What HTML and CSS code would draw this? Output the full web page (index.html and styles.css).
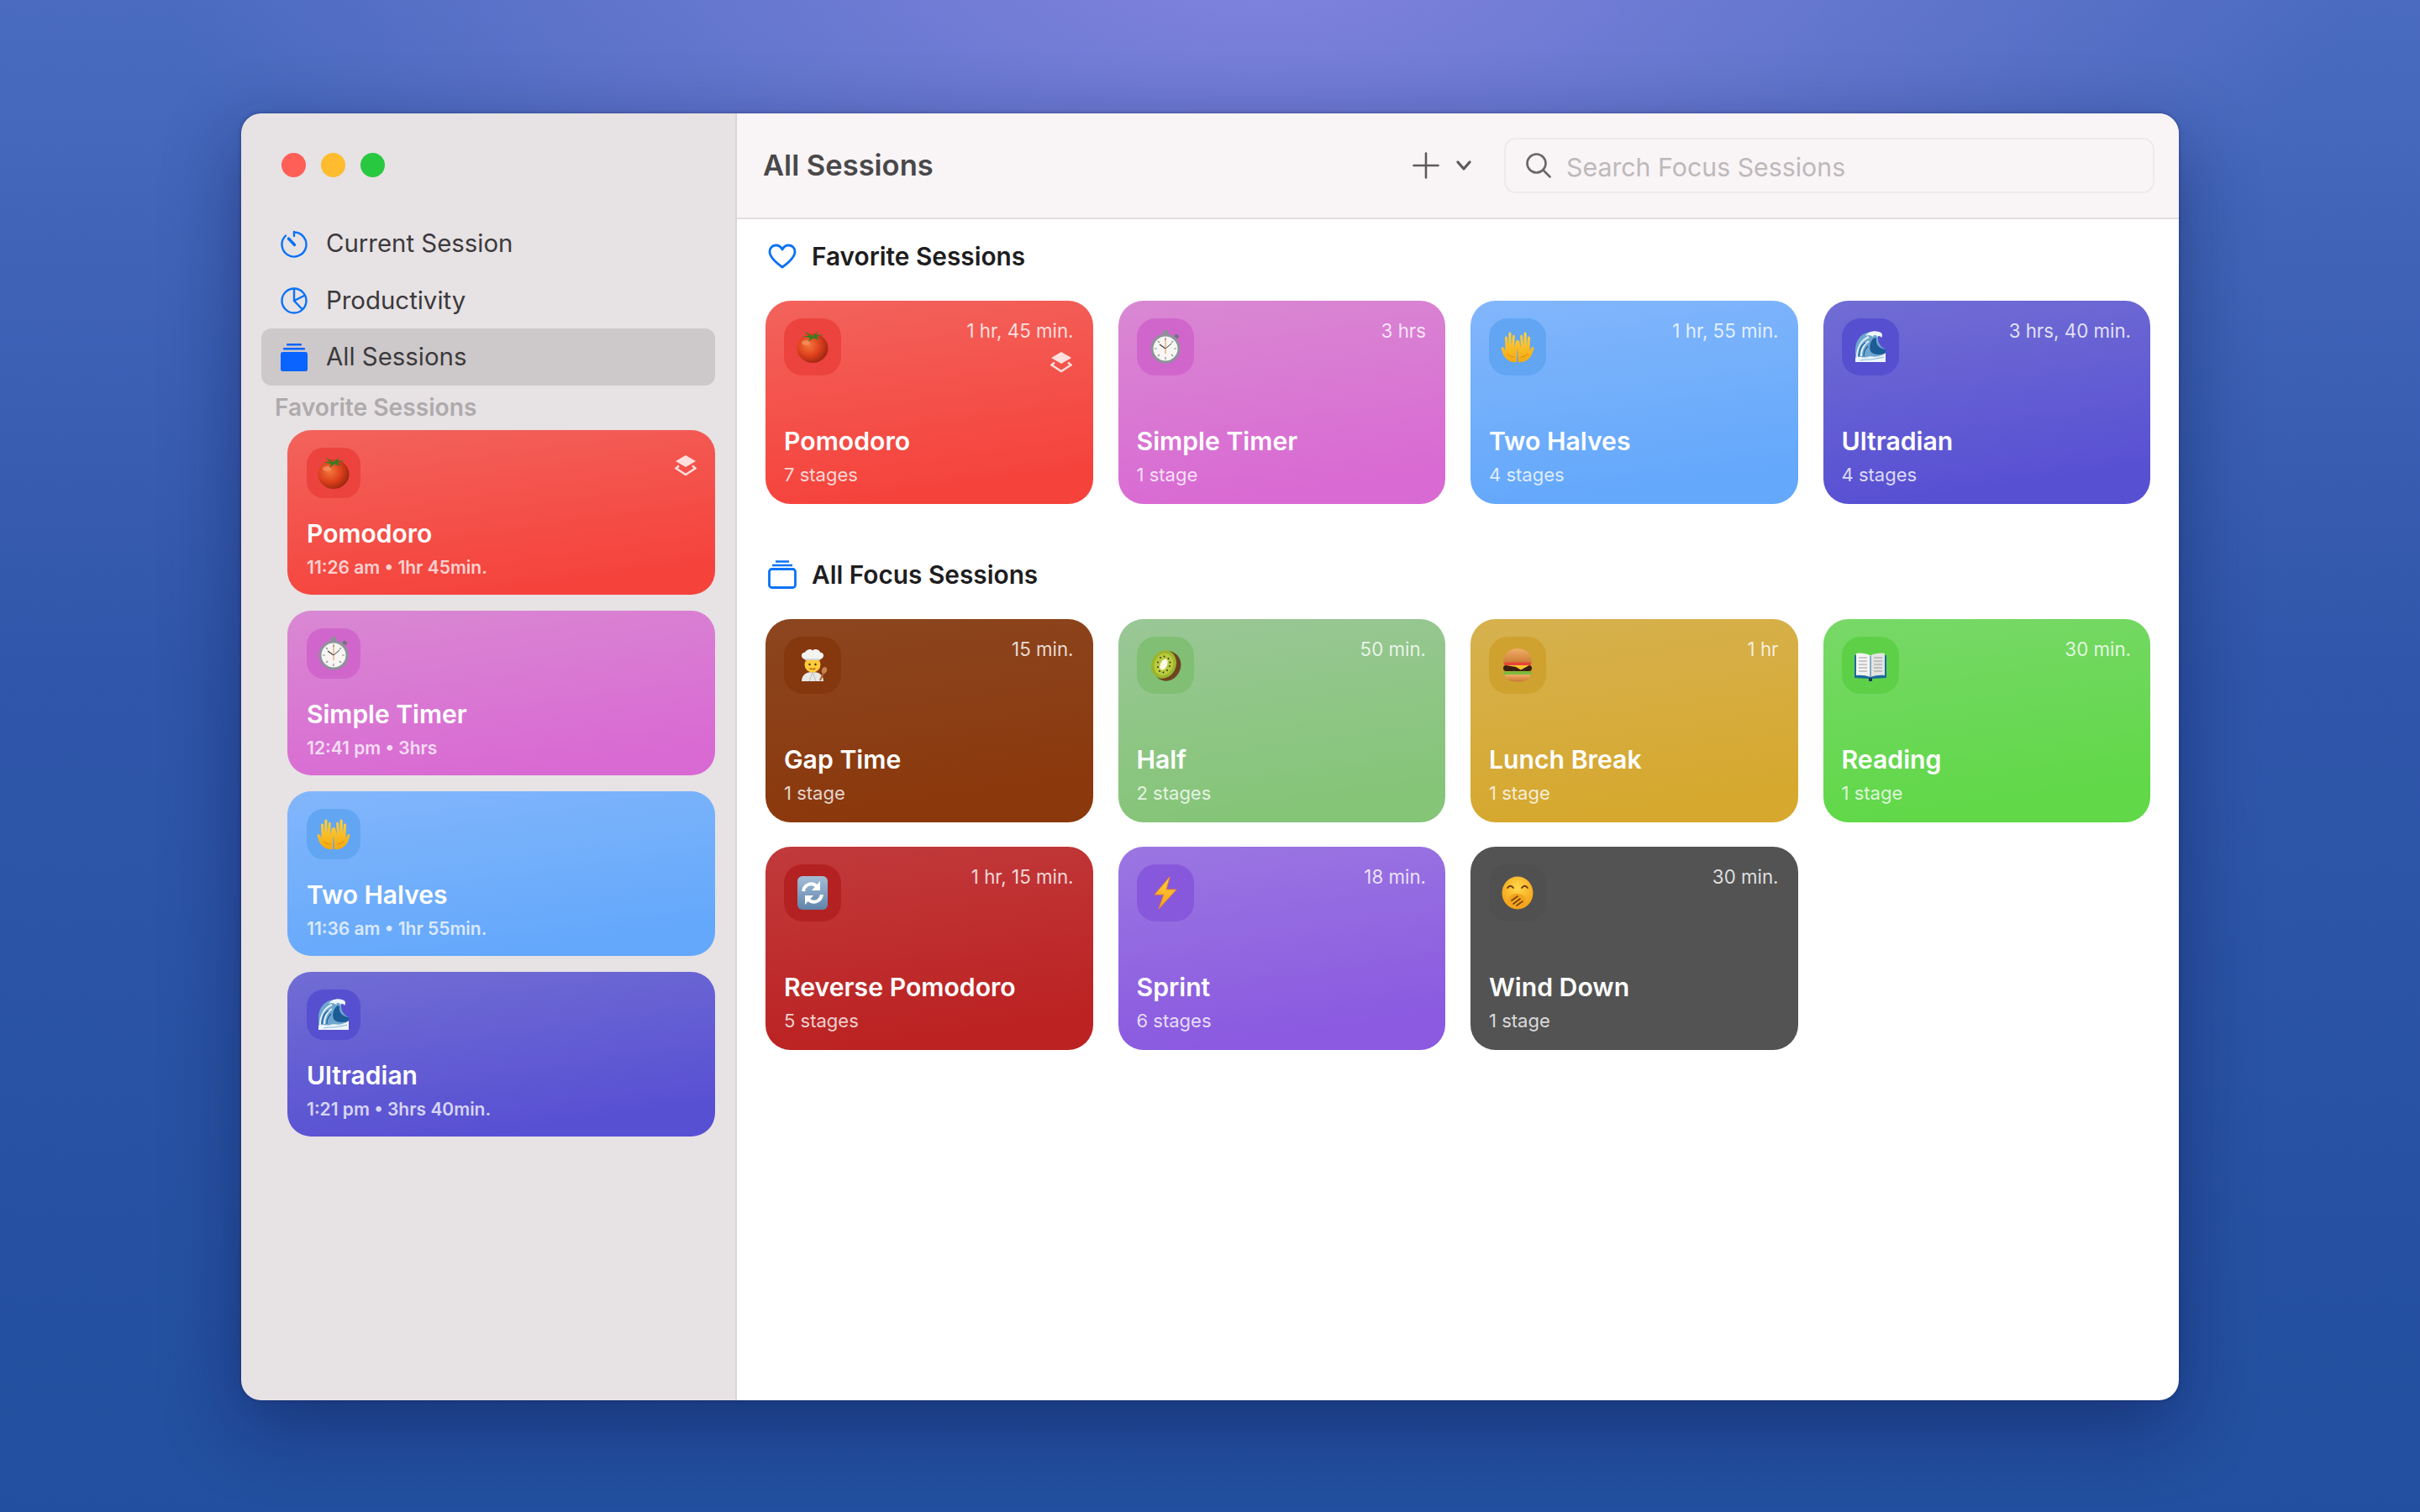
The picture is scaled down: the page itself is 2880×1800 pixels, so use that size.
FILE: index.html
```html
<!DOCTYPE html>
<html lang="en">
<head>
    <meta charset="UTF-8">
    <meta name="viewport" content="width=device-width, initial-scale=1.0">
    <title>All Sessions</title>
    <link rel="stylesheet" href="styles.css">
</head>
<body>
    <svg class="sprites" xmlns="http://www.w3.org/2000/svg">
        <defs>
            <radialGradient id="g-tomato" cx="38%" cy="40%" r="68%">
                <stop offset="0" stop-color="#f4783c"/>
                <stop offset=".55" stop-color="#dc3f1c"/>
                <stop offset="1" stop-color="#96240e"/>
            </radialGradient>
            <linearGradient id="g-hand" x1="0" y1="0" x2="0" y2="1">
                <stop offset="0" stop-color="#ffd23e"/>
                <stop offset="1" stop-color="#f4a90f"/>
            </linearGradient>
            <radialGradient id="g-face" cx="50%" cy="35%" r="70%">
                <stop offset="0" stop-color="#ffd84a"/>
                <stop offset="1" stop-color="#f39a12"/>
            </radialGradient>
            <linearGradient id="g-bun" x1="0" y1="0" x2="0" y2="1">
                <stop offset="0" stop-color="#f0ad68"/>
                <stop offset="1" stop-color="#cc7a34"/>
            </linearGradient>
            <linearGradient id="g-refresh" x1="0" y1="0" x2="0" y2="1">
                <stop offset="0" stop-color="#a5bdd6"/>
                <stop offset="1" stop-color="#5f84ab"/>
            </linearGradient>
            <linearGradient id="g-bolt" x1="0" y1="0" x2="0" y2="1">
                <stop offset="0" stop-color="#ffd23e"/>
                <stop offset="1" stop-color="#f7a01c"/>
            </linearGradient>
        </defs>

        <symbol id="e-tomato" viewBox="0 0 40 40">
            <ellipse cx="20" cy="21.5" rx="18.5" ry="17.5" fill="url(#g-tomato)"/>
            <ellipse cx="12" cy="15" rx="5" ry="3" fill="#f9a578" opacity=".55"/>
            <path d="M20 7 L10 1 L16 7 L8 7 L17 9.5 L15 14 L21 9.5 L28 12 L25 8 L33 5 L24 6 L27 1 Z" fill="#3c7a24"/>
        </symbol>

        <symbol id="e-watch" viewBox="0 0 40 40">
            <rect x="17" y="0" width="6" height="5" rx="1.5" fill="#8b8f97"/>
            <rect x="31" y="5" width="5" height="4" rx="1" fill="#6f747c" transform="rotate(40 33 7)"/>
            <circle cx="20" cy="22" r="17.5" fill="#8d929a"/>
            <circle cx="20" cy="22" r="14.5" fill="#f7f6f3"/>
            <g stroke="#8b8f97" stroke-width="1.2">
                <path d="M20 9v3M20 32v3M7 22h3M30 22h3M11 13l2 2M29 13l-2 2M11 31l2-2M29 31l-2-2"/>
            </g>
            <path d="M20 22 L13 17" stroke="#3c3f44" stroke-width="1.2"/>
            <path d="M20 22 L27 16" stroke="#3c3f44" stroke-width="1"/>
            <path d="M20 10 L20 28" stroke="#e8742f" stroke-width=".8"/>
        </symbol>

        <symbol id="e-hands" viewBox="0 0 40 40">
            <path d="M19 38 C12 39 6 35 3 29 L0.6 22 C0 20 2.6 19 3.6 21 L5.5 25 L5 9 C5 7 7.8 7 8 9 L9 19 L9.4 4 C9.5 2 12.4 2 12.4 4 L12.6 19 L14 7 C14.3 5 17 5.4 16.8 7.4 L16 21 L18 13 C18.6 11 21 12 20.6 14 L19.4 28 Z" fill="url(#g-hand)"/>
            <path d="M21 38 C28 39 34 35 37 29 L39.4 22 C40 20 37.4 19 36.4 21 L34.5 25 L35 9 C35 7 32.2 7 32 9 L31 19 L30.6 4 C30.5 2 27.6 2 27.6 4 L27.4 19 L26 7 C25.7 5 23 5.4 23.2 7.4 L24 21 L22 13 C21.4 11 19 12 19.4 14 L20.6 28 Z" fill="url(#g-hand)"/>
            <path d="M8 28 C10 31 13 32 16 32 M32 28 C30 31 27 32 24 32" fill="none" stroke="#d98a0c" stroke-width="1"/>
        </symbol>

        <symbol id="e-wave" viewBox="0 0 40 40">
            <path d="M2 38 V24 C2 11 10 3 20 2 L30 3 C28 10 28 18 38 23 V38 Z" fill="#6fa6cf"/>
            <path d="M25 9 C20 12 18 19 20 25 C22 29 29 30 38 28 V23 C30 22 26 17 27 10 Z" fill="#1b5c96"/>
            <path d="M4 32 C4 21 9 12 18 8 M9 31 C9 24 12 17 18 13" fill="none" stroke="#e4eff7" stroke-width="2"/>
            <path d="M6 33 C6 24 9 18 14 15 M12 31 C12 26 14 22 17 19" fill="none" stroke="#1f639c" stroke-width="1.3"/>
            <path d="M14 7 C17 2 24 0 30 2 C34 3 35 6 33 9 C32 7 30 6 28 8 C27 5 24 5 23 8 C21 6 17 5 14 7 Z" fill="#eef5fa"/>
            <path d="M2 38 V33 C7 30 11 34 16 32 C21 30 24 33 30 31 C33 30 36 29 38 27 V38 Z" fill="#eef5fa"/>
            <path d="M8 36 C14 34 20 36 26 34 C30 33 33 33 36 32" fill="none" stroke="#8fbcdc" stroke-width="1.2"/>
        </symbol>

        <symbol id="e-cook" viewBox="0 0 40 40">
            <path d="M7 39 C7 31 13 28 20 28 C27 28 33 31 33 39 Z" fill="#e8e8e6"/>
            <path d="M20 28 L16 39 M20 28 L24 39" stroke="#bdbdbb" stroke-width="1"/>
            <circle cx="20" cy="19" r="9.5" fill="#ffcb3a"/>
            <path d="M10.5 18 C11 14 14 13 20 13 C26 13 29 14 29.5 18 L29 13 L11 13 Z" fill="#a3592a"/>
            <path d="M11 13 C6 12 5 5 11 4.5 C13 1 18 0 20 2.5 C23 0 28 1 29 4.5 C35 5 34 12 29 13 Z" fill="#f3f3f1"/>
            <path d="M11 12h18v2H11z" fill="#d4d4d2"/>
            <circle cx="16.5" cy="19" r="1.2" fill="#4a2c10"/>
            <circle cx="23.5" cy="19" r="1.2" fill="#4a2c10"/>
            <path d="M16.5 23.5 C18 25 22 25 23.5 23.5" fill="none" stroke="#a9591c" stroke-width="1.1"/>
            <path d="M29 38 L33 29" stroke="#a8683a" stroke-width="2"/>
            <ellipse cx="34" cy="26" rx="3" ry="4" fill="#c4854f" transform="rotate(20 34 26)"/>
        </symbol>

        <symbol id="e-kiwi" viewBox="0 0 40 40">
            <ellipse cx="22" cy="21" rx="16" ry="18" fill="#6d4420" transform="rotate(25 22 21)"/>
            <ellipse cx="18" cy="19" rx="14.5" ry="17" fill="#9bb52c" transform="rotate(25 18 19)"/>
            <ellipse cx="18" cy="19" rx="11" ry="13.5" fill="#b9cb3f" transform="rotate(25 18 19)"/>
            <ellipse cx="18" cy="19" rx="4" ry="7" fill="#fbfbe8" transform="rotate(25 18 19)"/>
            <g fill="#2b2a14">
                <circle cx="23.5" cy="12" r=".9"/><circle cx="25.5" cy="16.5" r=".9"/><circle cx="25" cy="21" r=".9"/>
                <circle cx="22" cy="26" r=".9"/><circle cx="17.5" cy="28.5" r=".9"/><circle cx="13" cy="27" r=".9"/>
                <circle cx="11" cy="22" r=".9"/><circle cx="11" cy="16.5" r=".9"/><circle cx="14" cy="11" r=".9"/>
                <circle cx="18.5" cy="9.5" r=".9"/>
            </g>
        </symbol>

        <symbol id="e-burger" viewBox="0 0 40 40">
            <path d="M3 18 C3 6 11 0 20 0 C29 0 37 6 37 18 Z" fill="url(#g-bun)"/>
            <rect x="4" y="16.5" width="32" height="4" rx="2" fill="#e8453a"/>
            <rect x="3" y="20" width="34" height="7" rx="3.5" fill="#3a1f10"/>
            <path d="M6 20 H34 L24 25.5 L18 22 Z" fill="#f7c52e"/>
            <path d="M3 28 C6 26 10 29 14 27 C18 26 22 29 26 27 C30 26 34 29 37 27 L36 32 H4 Z" fill="#7dbb3b"/>
            <path d="M5 31 H35 C35 37 30 39.5 20 39.5 C10 39.5 5 37 5 31 Z" fill="url(#g-bun)"/>
        </symbol>

        <symbol id="e-book" viewBox="0 0 40 40">
            <path d="M1 35 V8 L19 9 L21 9 L39 8 V35 L21 36 H19 Z" fill="#1c6a9c"/>
            <path d="M3 32 V6 C9 5 15 6 19.5 8 V34 C15 32 9 31.5 3 32 Z" fill="#f4f4f2"/>
            <path d="M37 32 V6 C31 5 25 6 20.5 8 V34 C25 32 31 31.5 37 32 Z" fill="#e3e3e1"/>
            <path d="M6 11h10M6 15h10M6 19h10M6 23h10M6 27h10M24 11h10M24 15h10M24 19h10M24 23h10M24 27h10" stroke="#9c9c9c" stroke-width="1.1"/>
            <rect x="18" y="35" width="4" height="4" fill="#123c5c"/>
        </symbol>

        <symbol id="e-refresh" viewBox="0 0 40 40">
            <rect x="2" y="0" width="36" height="40" rx="6" fill="url(#g-refresh)"/>
            <path d="M9 18 C10 11 16 8 22 10 L25 12" fill="none" stroke="#fff" stroke-width="4"/>
            <path d="M29 6 V17 H19 Z" fill="#fff"/>
            <path d="M31 22 C30 29 24 32 18 30 L15 28" fill="none" stroke="#fff" stroke-width="4"/>
            <path d="M11 34 V23 H21 Z" fill="#fff"/>
        </symbol>

        <symbol id="e-bolt" viewBox="0 0 40 40">
            <path d="M25 1 L7 22 H18 L12 39 L33 16 H21 Z" fill="url(#g-bolt)" stroke="#f08a18" stroke-width="1" stroke-linejoin="round"/>
        </symbol>

        <symbol id="e-yawn" viewBox="0 0 40 40">
            <ellipse cx="20" cy="20" rx="18.5" ry="19.5" fill="url(#g-face)"/>
            <path d="M8 14 C10 11 13 11 15 14 M25 14 C27 11 30 11 32 14" fill="none" stroke="#6b3a10" stroke-width="1.8" stroke-linecap="round"/>
            <path d="M10 33 C8 27 11 21 17 21 C23 20 29 23 30 28 C30 33 25 38 18 38 C14 38 11 36 10 33 Z" fill="#f3a520"/>
            <path d="M13 29 L20 24 M15 33 L23 27 M19 35 L26 30" stroke="#7a4510" stroke-width="1.7" stroke-linecap="round"/>
        </symbol>

        <symbol id="i-layers" viewBox="0 0 26 26">
            <path d="M13 1 L25 8 L13 15 L1 8 Z" fill="currentColor"/>
            <path d="M5 13.5 L1.5 16.5 L13 24 L24.5 16.5 L21 13.5" fill="none" stroke="currentColor" stroke-width="2.4"/>
        </symbol>
    </svg>

    <div class="window">
        <aside class="sidebar">
            <div class="lights">
                <span class="light light-red"></span>
                <span class="light light-yellow"></span>
                <span class="light light-green"></span>
            </div>

            <nav class="nav">
                <div class="nav-row">
                    <svg class="nav-icon" viewBox="0 0 32 34" fill="none" stroke="#0a72f5" stroke-width="2.4">
                        <path d="M16 3.5 A14.5 14.5 0 1 1 6 7.5" stroke-linecap="round"/>
                        <path d="M16 3 V8" stroke-linecap="round"/>
                        <path d="M9.5 11 L16.5 18.5" stroke-width="3.4" stroke-linecap="round"/>
                    </svg>
                    <span>Current Session</span>
                </div>
                <div class="nav-row">
                    <svg class="nav-icon" viewBox="0 0 32 34" fill="none" stroke="#0a72f5" stroke-width="2.4">
                        <circle cx="16" cy="18" r="14.5"/>
                        <path d="M16 3.5 V18 L26 28.5 M16 18 L29 11.5"/>
                    </svg>
                    <span>Productivity</span>
                </div>
                <div class="nav-row nav-row-active">
                    <svg class="nav-icon" viewBox="0 0 32 34" fill="#0a64ff">
                        <rect x="0" y="11" width="32" height="23" rx="2.5"/>
                        <rect x="3" y="6" width="26" height="2.5" rx="1"/>
                        <rect x="7" y="1" width="18" height="2.5" rx="1"/>
                    </svg>
                    <span>All Sessions</span>
                </div>
            </nav>

            <div class="side-label">Favorite Sessions</div>

            <div class="side-cards">
                <div class="side-card bg-red">
                    <div class="card-top">
                        <div class="tile tile-red"><svg class="emoji"><use href="#e-tomato"/></svg></div>
                        <svg class="layers side-layers"><use href="#i-layers"/></svg>
                    </div>
                    <div class="side-name">Pomodoro</div>
                    <div class="side-sub">11:26 am • 1hr 45min.</div>
                </div>
                <div class="side-card bg-pink">
                    <div class="card-top">
                        <div class="tile tile-pink"><svg class="emoji"><use href="#e-watch"/></svg></div>
                    </div>
                    <div class="side-name">Simple Timer</div>
                    <div class="side-sub">12:41 pm • 3hrs</div>
                </div>
                <div class="side-card bg-blue">
                    <div class="card-top">
                        <div class="tile tile-blue"><svg class="emoji"><use href="#e-hands"/></svg></div>
                    </div>
                    <div class="side-name">Two Halves</div>
                    <div class="side-sub">11:36 am • 1hr 55min.</div>
                </div>
                <div class="side-card bg-indigo">
                    <div class="card-top">
                        <div class="tile tile-indigo"><svg class="emoji"><use href="#e-wave"/></svg></div>
                    </div>
                    <div class="side-name">Ultradian</div>
                    <div class="side-sub">1:21 pm • 3hrs 40min.</div>
                </div>
            </div>
        </aside>

        <main class="main">
            <header class="toolbar">
                <h1 class="toolbar-title">All Sessions</h1>
                <div class="add-btn">
                    <svg class="add-plus" viewBox="0 0 32 32" stroke="#5d5a5c" stroke-width="2.6" stroke-linecap="round">
                        <path d="M16 1.5 V30.5 M1.5 16 H30.5"/>
                    </svg>
                    <svg class="add-chevron" viewBox="0 0 18 12" fill="none" stroke="#5d5a5c" stroke-width="3.2" stroke-linecap="round" stroke-linejoin="round">
                        <path d="M2 2 L9 10 L16 2"/>
                    </svg>
                </div>
                <div class="search">
                    <svg class="search-icon" viewBox="0 0 30 30" fill="none" stroke="#6a6769" stroke-width="2.6" stroke-linecap="round">
                        <circle cx="12.5" cy="12.5" r="11"/>
                        <path d="M20.5 20.5 L28.5 28.5"/>
                    </svg>
                    <span class="search-text">Search Focus Sessions</span>
                </div>
            </header>

            <div class="content">
                <div class="section-head section-head-first">
                    <svg class="section-icon" viewBox="0 0 34 30" fill="none" stroke="#0a72f5" stroke-width="2.8" stroke-linejoin="round">
                        <path d="M17 28 C10 23 2 16 2 9.5 C2 5 5.5 2 9.5 2 C12.8 2 15.5 4 17 7 C18.5 4 21.2 2 24.5 2 C28.5 2 32 5 32 9.5 C32 16 24 23 17 28 Z"/>
                    </svg>
                    <h2 class="section-title">Favorite Sessions</h2>
                </div>

                <div class="card-grid">
                    <div class="card bg-red">
                        <div class="card-top">
                            <div class="tile tile-red"><svg class="emoji"><use href="#e-tomato"/></svg></div>
                            <div class="card-meta">
                                <span class="card-time">1 hr, 45 min.</span>
                                <svg class="layers"><use href="#i-layers"/></svg>
                            </div>
                        </div>
                        <div class="card-name">Pomodoro</div>
                        <div class="card-sub">7 stages</div>
                    </div>
                    <div class="card bg-pink">
                        <div class="card-top">
                            <div class="tile tile-pink"><svg class="emoji"><use href="#e-watch"/></svg></div>
                            <div class="card-meta"><span class="card-time">3 hrs</span></div>
                        </div>
                        <div class="card-name">Simple Timer</div>
                        <div class="card-sub">1 stage</div>
                    </div>
                    <div class="card bg-blue">
                        <div class="card-top">
                            <div class="tile tile-blue"><svg class="emoji"><use href="#e-hands"/></svg></div>
                            <div class="card-meta"><span class="card-time">1 hr, 55 min.</span></div>
                        </div>
                        <div class="card-name">Two Halves</div>
                        <div class="card-sub">4 stages</div>
                    </div>
                    <div class="card bg-indigo">
                        <div class="card-top">
                            <div class="tile tile-indigo"><svg class="emoji"><use href="#e-wave"/></svg></div>
                            <div class="card-meta"><span class="card-time">3 hrs, 40 min.</span></div>
                        </div>
                        <div class="card-name">Ultradian</div>
                        <div class="card-sub">4 stages</div>
                    </div>
                </div>

                <div class="section-head section-head-second">
                    <svg class="section-icon" viewBox="0 0 34 34" fill="none" stroke="#0a72f5" stroke-width="2.8">
                        <rect x="1.5" y="10.5" width="31" height="22" rx="3"/>
                        <path d="M5 6 H29 M9 1.5 H25" stroke-width="2.4"/>
                    </svg>
                    <h2 class="section-title">All Focus Sessions</h2>
                </div>

                <div class="card-grid">
                    <div class="card bg-brown">
                        <div class="card-top">
                            <div class="tile tile-brown"><svg class="emoji"><use href="#e-cook"/></svg></div>
                            <div class="card-meta"><span class="card-time">15 min.</span></div>
                        </div>
                        <div class="card-name">Gap Time</div>
                        <div class="card-sub">1 stage</div>
                    </div>
                    <div class="card bg-sage">
                        <div class="card-top">
                            <div class="tile tile-sage"><svg class="emoji"><use href="#e-kiwi"/></svg></div>
                            <div class="card-meta"><span class="card-time">50 min.</span></div>
                        </div>
                        <div class="card-name">Half</div>
                        <div class="card-sub">2 stages</div>
                    </div>
                    <div class="card bg-gold">
                        <div class="card-top">
                            <div class="tile tile-gold"><svg class="emoji"><use href="#e-burger"/></svg></div>
                            <div class="card-meta"><span class="card-time">1 hr</span></div>
                        </div>
                        <div class="card-name">Lunch Break</div>
                        <div class="card-sub">1 stage</div>
                    </div>
                    <div class="card bg-green">
                        <div class="card-top">
                            <div class="tile tile-green"><svg class="emoji"><use href="#e-book"/></svg></div>
                            <div class="card-meta"><span class="card-time">30 min.</span></div>
                        </div>
                        <div class="card-name">Reading</div>
                        <div class="card-sub">1 stage</div>
                    </div>
                    <div class="card bg-crimson">
                        <div class="card-top">
                            <div class="tile tile-crimson"><svg class="emoji"><use href="#e-refresh"/></svg></div>
                            <div class="card-meta"><span class="card-time">1 hr, 15 min.</span></div>
                        </div>
                        <div class="card-name">Reverse Pomodoro</div>
                        <div class="card-sub">5 stages</div>
                    </div>
                    <div class="card bg-purple">
                        <div class="card-top">
                            <div class="tile tile-purple"><svg class="emoji"><use href="#e-bolt"/></svg></div>
                            <div class="card-meta"><span class="card-time">18 min.</span></div>
                        </div>
                        <div class="card-name">Sprint</div>
                        <div class="card-sub">6 stages</div>
                    </div>
                    <div class="card bg-gray">
                        <div class="card-top">
                            <div class="tile tile-gray"><svg class="emoji"><use href="#e-yawn"/></svg></div>
                            <div class="card-meta"><span class="card-time">30 min.</span></div>
                        </div>
                        <div class="card-name">Wind Down</div>
                        <div class="card-sub">1 stage</div>
                    </div>
                </div>
            </div>
        </main>
    </div>
</body>
</html>
```

FILE: styles.css
```css
* {
    box-sizing: border-box;
}

body {
    display: flex;
    align-items: center;
    justify-content: center;
    height: 100vh;
    margin: 0;
    padding-top: 2px;
    overflow: hidden;
    font-family: 'Inter', 'Liberation Sans', sans-serif;
    background-color: #2f55a8;
    background-image:
        radial-gradient(ellipse 1300px 560px at 1500px -40px, #8183de 0%, rgba(129, 131, 222, 0) 100%),
        linear-gradient(180deg, #4a6bc0 0%, #2f56aa 45%, #224f9f 100%);
}

.sprites {
    position: absolute;
    width: 0;
    height: 0;
}

.window {
    display: flex;
    width: 2306px;
    height: 1532px;
    border-radius: 24px;
    overflow: hidden;
    box-shadow: 0 30px 90px rgba(10, 20, 70, 0.45), 0 0 4px rgba(10, 20, 70, 0.4);
}

/* sidebar */

.sidebar {
    flex: 0 0 590px;
    padding: 47px 24px 0 24px;
    background-color: #e7e2e4;
    border-right: 2px solid #dad6d8;
}

.lights {
    display: flex;
    gap: 18px;
    height: 29px;
    margin: 0 0 45px 24px;
}

.light {
    width: 29px;
    height: 29px;
    border-radius: 50%;
}

.light-red { background-color: #ff5f57; }
.light-yellow { background-color: #febc2e; }
.light-green { background-color: #28c840; }

.nav-row {
    display: flex;
    align-items: center;
    gap: 22px;
    height: 67.5px;
    padding-left: 23px;
    border-radius: 12px;
    font-size: 29.4px;
    color: #3b3a3c;
}

.nav-row-active {
    background-color: #cdc8ca;
}

.nav-icon {
    width: 32px;
    height: 34px;
}

.side-label {
    height: 53px;
    padding-left: 16px;
    font-size: 28.2px;
    line-height: 53px;
    font-weight: 600;
    color: #aeaaac;
}

.side-cards {
    display: flex;
    flex-direction: column;
    gap: 19px;
    margin-left: 31px;
}

.side-card {
    display: flex;
    flex-direction: column;
    height: 196px;
    padding: 21px 22px 18px 23px;
    border-radius: 28px;
    color: white;
}

.side-card .tile {
    width: 64px;
    height: 60px;
    border-radius: 20px;
}

.side-name {
    margin-top: auto;
    font-size: 30px;
    line-height: 40px;
    font-weight: 600;
}

.side-sub {
    margin-top: 7px;
    font-size: 21px;
    line-height: 28px;
    font-weight: 600;
    color: rgba(255, 255, 255, 0.75);
}

/* main */

.main {
    display: flex;
    flex: 1;
    flex-direction: column;
    background-color: white;
}

.toolbar {
    display: flex;
    align-items: center;
    flex: 0 0 126px;
    padding: 0 29px 0 31px;
    background-color: #f9f4f6;
    border-bottom: 2px solid #e2dfe0;
}

.toolbar-title {
    margin: 0 auto 2px 0;
    font-size: 34.5px;
    font-weight: 600;
    color: #49484a;
}

.add-btn {
    display: flex;
    align-items: center;
    gap: 20px;
    margin-right: 39px;
}

.add-plus {
    width: 32px;
    height: 32px;
}

.add-chevron {
    width: 18px;
    height: 12px;
}

.search {
    display: flex;
    align-items: center;
    gap: 18px;
    width: 774px;
    height: 66px;
    padding-left: 24px;
    border: 2px solid #eeeaec;
    border-radius: 14px;
}

.search-icon {
    width: 30px;
    height: 30px;
}

.search-text {
    padding-top: 4px;
    font-size: 30.3px;
    color: #bdb9bb;
}

.content {
    padding: 27px 34px 0 34px;
}

.section-head {
    display: flex;
    align-items: center;
    gap: 18px;
    height: 34px;
    padding-left: 3px;
}

.section-head-first {
    margin-bottom: 36px;
}

.section-head-second {
    margin-top: 67px;
    margin-bottom: 36px;
}

.section-icon {
    width: 34px;
    height: 34px;
}

.section-title {
    margin: 0;
    font-size: 29.8px;
    font-weight: 600;
    color: #1e1d1f;
}

.card-grid {
    display: grid;
    grid-template-columns: repeat(4, 389.5px);
    grid-auto-rows: 242px;
    gap: 29px 30px;
}

.card {
    display: flex;
    flex-direction: column;
    padding: 21px 23px 20px 22px;
    border-radius: 30px;
    color: white;
}

.card-top {
    display: flex;
    justify-content: space-between;
}

.tile {
    display: flex;
    align-items: center;
    justify-content: center;
    width: 68px;
    height: 68px;
    border-radius: 22px;
}

.emoji {
    width: 40px;
    height: 40px;
}

.card-meta {
    display: flex;
    flex-direction: column;
    align-items: flex-end;
}

.card-time {
    font-size: 22.3px;
    line-height: 30px;
    color: rgba(255, 255, 255, 0.82);
}

.layers {
    width: 26px;
    height: 26px;
    margin: 9px 2px 0 0;
    color: #ffe0dd;
}

.side-layers {
    margin: 8px 0 0 0;
}

.card-name {
    margin-top: auto;
    font-size: 30.2px;
    line-height: 40px;
    font-weight: 600;
}

.card-sub {
    margin-top: 5px;
    font-size: 22px;
    line-height: 30px;
    color: rgba(255, 255, 255, 0.8);
}

/* session colours */

.bg-red { background-image: linear-gradient(172deg, #f2635c, #f5433c 85%); }
.bg-pink { background-image: linear-gradient(172deg, #d988d3, #d96ad3 85%); }
.bg-blue { background-image: linear-gradient(172deg, #82b6fb, #64a8fb 85%); }
.bg-indigo { background-image: linear-gradient(172deg, #716dd4, #5850d3 85%); }
.bg-brown { background-image: linear-gradient(172deg, #8c461f, #8b380c 85%); }
.bg-sage { background-image: linear-gradient(172deg, #9ac796, #85c578 85%); }
.bg-gold { background-image: linear-gradient(172deg, #d6b14f, #d6a82e 85%); }
.bg-green { background-image: linear-gradient(172deg, #78d868, #60d848 85%); }
.bg-crimson { background-image: linear-gradient(172deg, #c13a3c, #bc2222 85%); }
.bg-purple { background-image: linear-gradient(172deg, #9b76e2, #8b5ae0 85%); }
.bg-gray { background-color: #535353; }

.tile-red { background-color: #ec433f; }
.tile-pink { background-color: #d066cb; }
.tile-blue { background-color: #62a5f3; }
.tile-indigo { background-color: #564fd0; }
.tile-brown { background-color: #85370e; }
.tile-sage { background-color: #80bf74; }
.tile-gold { background-color: #cfa230; }
.tile-green { background-color: #5ed048; }
.tile-crimson { background-color: #b42122; }
.tile-purple { background-color: #8858dc; }
.tile-gray { background-color: #505050; }
```
